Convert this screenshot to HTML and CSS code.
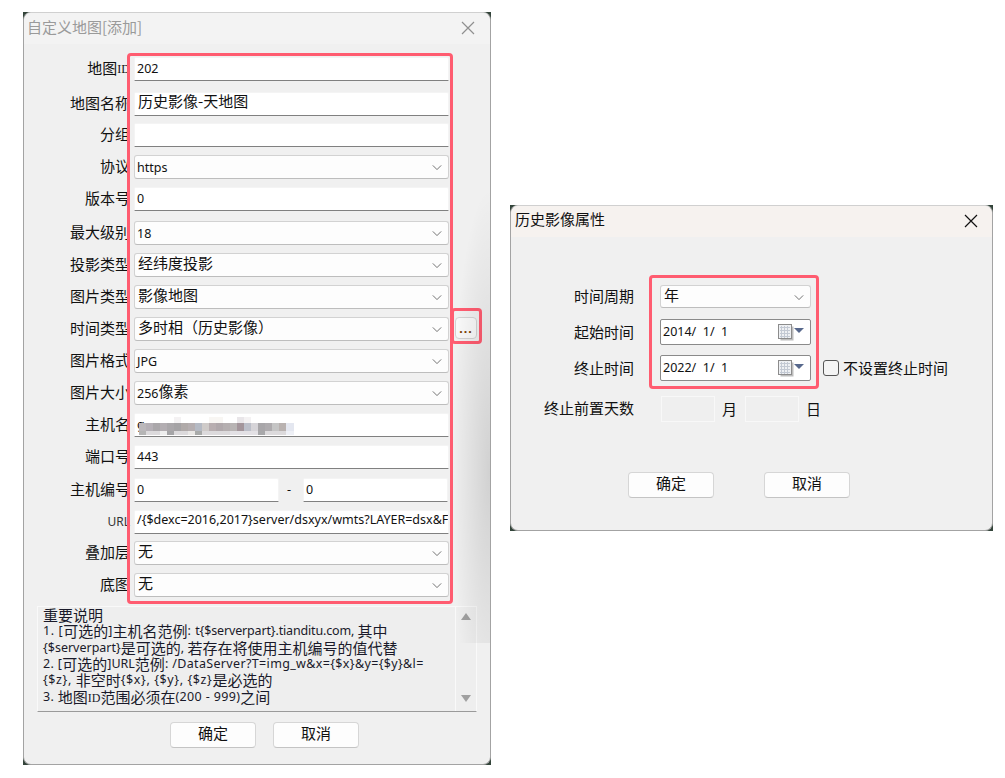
FILE: index.html
```html
<!DOCTYPE html>
<html lang="zh-CN">
<head>
<meta charset="utf-8">
<title>自定义地图</title>
<link rel="stylesheet" href="styles.css">
</head>
<body>
<svg class="defs" width="0" height="0" aria-hidden="true">
  <symbol id="chev" viewBox="0 0 12 8"><path d="M1 1.5 6 6.5 11 1.5" fill="none" stroke="#666" stroke-width="1.1"/></symbol>
  <symbol id="x" viewBox="0 0 14 14"><path d="M1 1 13 13M13 1 1 13" fill="none" stroke="currentColor" stroke-width="1.2"/></symbol>
  <symbol id="cal" viewBox="0 0 28 17">
    <rect x="2.5" y="2.5" width="13" height="14" fill="#bdbdbd"/>
    <rect x="0.5" y="0.5" width="13" height="14" fill="#eef0f3" stroke="#8c8c8c"/>
    <path d="M2 3.500H12M2 6.500H12M2 9.500H12M2 12.500H12M3.500 2V14M6.500 2V14M9.500 2V14" stroke="#c3c9d3" stroke-width="1"/>
    <path d="M16 4H26L21 9Z" fill="#57688c"/>
  </symbol>
</svg>

<section class="win win-left">
  <div class="win-shell">
    <header class="titlebar titlebar-left">
      <span class="title-text title-muted">自定义地图[添加]</span>
      <svg class="close close-muted"><use href="#x"/></svg>
    </header>
    <div class="left-body">
      <div class="form-grid">
        <label class="lbl">地图<span class="id-mark">ID</span></label>
        <div class="field"><span class="lat">202</span></div><span></span>

        <label class="lbl">地图名称</label>
        <div class="field field-high">历史影像-天地图</div><span></span>

        <label class="lbl">分组</label>
        <div class="field"></div><span></span>

        <label class="lbl">协议</label>
        <div class="combo"><span class="lat">https</span><svg class="chev"><use href="#chev"/></svg></div><span></span>

        <label class="lbl">版本号</label>
        <div class="field"><span class="lat">0</span></div><span></span>

        <label class="lbl">最大级别</label>
        <div class="combo"><span class="lat">18</span><svg class="chev"><use href="#chev"/></svg></div><span></span>

        <label class="lbl">投影类型</label>
        <div class="combo">经纬度投影<svg class="chev"><use href="#chev"/></svg></div><span></span>

        <label class="lbl">图片类型</label>
        <div class="combo">影像地图<svg class="chev"><use href="#chev"/></svg></div><span></span>

        <label class="lbl">时间类型</label>
        <div class="combo">多时相（历史影像）<svg class="chev"><use href="#chev"/></svg></div>
        <button class="more lat" type="button">...</button>

        <label class="lbl">图片格式</label>
        <div class="combo"><span class="lat">JPG</span><svg class="chev"><use href="#chev"/></svg></div><span></span>

        <label class="lbl">图片大小</label>
        <div class="combo"><span class="lat">256</span>像素<svg class="chev"><use href="#chev"/></svg></div><span></span>

        <label class="lbl">主机名</label>
        <div class="field host"><span class="lat">g</span>
          <svg class="mosaic" viewBox="0 0 155 20" width="155" height="20" aria-hidden="true">
            <g fill="#f4f2f3"><rect x="35" y="0" width="7" height="6"/><rect x="70" y="0" width="14" height="6" fill="#f8f6f3"/><rect x="98" y="0" width="7" height="6" fill="#e9e6e9"/><rect x="105" y="0" width="7" height="6"/></g>
            <g fill="#aaa7aa">
              <rect x="0" y="6" width="7" height="8" fill="#bbb8bb"/><rect x="7" y="6" width="7" height="8" fill="#b5b0b6"/><rect x="14" y="6" width="7" height="8"/><rect x="21" y="6" width="7" height="8" fill="#b3aeb2"/><rect x="28" y="6" width="7" height="8"/><rect x="35" y="6" width="7" height="8" fill="#a5a3a5"/><rect x="42" y="6" width="7" height="8" fill="#b0aaa9"/><rect x="49" y="6" width="7" height="8" fill="#b5aeb0"/><rect x="56" y="6" width="7" height="8" fill="#b5bac4"/><rect x="63" y="6" width="7" height="8" fill="#cfcbc9"/><rect x="70" y="6" width="7" height="8" fill="#b8aeb0"/><rect x="77" y="6" width="7" height="8" fill="#b0a8ab"/><rect x="84" y="6" width="7" height="8" fill="#b5afb0"/><rect x="91" y="6" width="7" height="8" fill="#b8b4b4"/><rect x="98" y="6" width="7" height="8" fill="#a3959b"/><rect x="105" y="6" width="7" height="8" fill="#bcbfc9"/><rect x="112" y="6" width="7" height="8" fill="#d6d4d8"/><rect x="119" y="6" width="7" height="8" fill="#a8a6a9"/><rect x="126" y="6" width="7" height="8" fill="#aeabae"/><rect x="133" y="6" width="7" height="8" fill="#c5c5c5"/><rect x="140" y="6" width="7" height="8" fill="#b9b2b0"/><rect x="147" y="6" width="8" height="8" fill="#e4e7f0"/>
            </g>
            <g fill="#dcdadc">
              <rect x="0" y="14" width="7" height="4" fill="#b5b5b5"/><rect x="21" y="14" width="7" height="4" fill="#eeeeee"/><rect x="28" y="14" width="7" height="4" fill="#a5a5a7"/><rect x="49" y="14" width="7" height="4" fill="#eae8e6"/><rect x="56" y="14" width="7" height="4" fill="#a9abaa"/><rect x="63" y="14" width="7" height="4"/><rect x="91" y="14" width="28" height="4" fill="#e3e1e5"/><rect x="119" y="14" width="7" height="4" fill="#a8a8aa"/><rect x="7" y="14" width="14" height="4"/><rect x="35" y="14" width="14" height="4"/><rect x="70" y="14" width="21" height="4"/><rect x="126" y="14" width="21" height="4"/><rect x="147" y="14" width="8" height="4" fill="#eef0f6"/>
            </g>
          </svg>
        </div><span></span>

        <label class="lbl">端口号</label>
        <div class="field"><span class="lat">443</span></div><span></span>

        <label class="lbl">主机编号</label>
        <div class="pair">
          <div class="field"><span class="lat">0</span></div>
          <span class="dash lat">-</span>
          <div class="field"><span class="lat">0</span></div>
        </div><span></span>

        <label class="lbl lat-lbl">URL</label>
        <div class="field url"><span class="lat">/{$dexc=2016,2017}server/dsxyx/wmts?LAYER=dsx&amp;F</span></div><span></span>

        <label class="lbl">叠加层</label>
        <div class="combo">无<svg class="chev"><use href="#chev"/></svg></div><span></span>

        <label class="lbl">底图</label>
        <div class="combo">无<svg class="chev"><use href="#chev"/></svg></div><span></span>
      </div>

      <div class="notes">
        <div class="notes-text">
          <div class="note-line"><b>重要说明</b></div>
          <div class="note-line"><span class="spread-lg">1. [</span><b>可选的</b>]<b>主机名范例</b><span class="spread-lg">: </span><span class="tight">t{$serverpart}.tianditu.com, </span><b>其中</b></div>
          <div class="note-line">{$serverpart}<b>是可选的</b>, <b>若存在将使用主机编号的值代替</b></div>
          <div class="note-line"><span class="spread-md">2. [</span><b>可选的</b>]URL<b>范例</b><span class="spread-md">: /DataServer?T=img_w&amp;x={$x}&amp;y={$y}&amp;l=</span></div>
          <div class="note-line"><span class="spread-lg">{$z}, </span><b>非空时</b><span class="spread-lg">{$x}, {$y}, {$z}</span><b>是必选的</b></div>
          <div class="note-line"><span class="spread-md">3. </span><b>地图</b><i>ID</i><b>范围必须在</b><span class="spread-md">(200 - 999)</span><b>之间</b></div>
        </div>
        <div class="notes-scroll"><span class="arrow-up"></span><span class="arrow-down"></span></div>
      </div>

      <div class="actions actions-left">
        <button class="btn" type="button">确定</button>
        <button class="btn" type="button">取消</button>
      </div>
    </div>
    <div class="mark mark-form"></div>
    <div class="mark mark-more"></div>
    <div class="side-shade"></div>
  </div>
</section>

<section class="win win-right">
  <div class="win-shell">
    <header class="titlebar titlebar-right">
      <span class="title-text title-dark">历史影像属性</span>
      <svg class="close"><use href="#x"/></svg>
    </header>
    <div class="right-body">
      <div class="prop-grid">
        <label class="lbl prop-lbl prop-edge prop-first">时间周期</label>
        <div class="combo combo-short">年<svg class="chev"><use href="#chev"/></svg></div>
        <span></span>

        <label class="lbl prop-lbl">起始时间</label>
        <div class="date"><span class="lat">2014/&nbsp; 1/&nbsp; 1</span><svg class="cal"><use href="#cal"/></svg></div>
        <span></span>

        <label class="lbl prop-lbl">终止时间</label>
        <div class="date"><span class="lat">2022/&nbsp; 1/&nbsp; 1</span><svg class="cal"><use href="#cal"/></svg></div>
        <label class="check"><span class="box"></span>不设置终止时间</label>

        <label class="lbl prop-lbl prop-edge">终止前置天数</label>
        <div class="days">
          <span class="day-box"></span><span class="unit">月</span>
          <span class="day-box"></span><span class="unit">日</span>
        </div>
        <span></span>
      </div>
      <div class="actions actions-right">
        <button class="btn" type="button">确定</button>
        <button class="btn" type="button">取消</button>
      </div>
    </div>
    <div class="mark mark-prop"></div>
  </div>
</section>
</body>
</html>
```

FILE: styles.css
```css
* { box-sizing: border-box; }

html, body {
  margin: 0;
  height: 100%;
  background: #fff;
}

body {
  position: relative;
  width: 1005px;
  height: 778px;
  overflow: hidden;
  font-family: "Noto Sans CJK SC", "Noto Sans", sans-serif;
  font-size: 15px;
  color: #111;
}

.defs { position: absolute; }

.lat {
  display: inline-block;
  margin-left: -1px;
  padding-top: 4px;
  font-family: "Noto Sans", "Noto Sans CJK SC", sans-serif;
  font-size: 12.5px;
}

/* windows on the desktop */
.win {
  position: absolute;
  background: #33443a;
}

.win-left { left: 23px; top: 12px; width: 468px; height: 753px; }
.win-right { left: 510px; top: 205px; width: 483px; height: 326px; }

.win-shell {
  position: relative;
  width: 100%;
  height: 100%;
  display: flex;
  flex-direction: column;
  background: #f0f0f0;
  border-radius: 8px;
  border: 1px solid #a3a3a3;
  border-top-color: #d0d0d0;
  overflow: hidden;
}

.titlebar {
  display: flex;
  align-items: center;
  justify-content: space-between;
  flex: none;
}

.titlebar-left { height: 31px; background: #f3f3f3; padding: 0 15px 0 3px; }
.titlebar-right { height: 31px; background: #f6f2ef; padding: 0 14px 0 4px; }

.title-text { line-height: 1; padding-bottom: 4px; }
.title-dark { padding-bottom: 6px; }
.title-muted { color: #9a9a9a; }

.close { width: 14px; height: 14px; margin-bottom: 2px; color: #111; }
.close-muted { color: #8f8f8f; }

/* left form */
.left-body { flex: 1; padding-top: 13px; }

.form-grid {
  display: grid;
  grid-template-columns: 106px 315px 28px;
  grid-template-rows: 35px 31px 32px 32px 34px 32px 32px 32px 32px 32px 32px 32px 33px 32px 31px 32px 24px;
  column-gap: 4px;
}

.lbl {
  display: flex;
  align-items: center;
  justify-content: flex-end;
  height: 24px;
  padding-bottom: 4px;
  white-space: nowrap;
  color: #111;
}

.id-mark {
  padding-top: 4px;
  font-family: "Liberation Serif", serif;
  font-size: 12px;
}

.lat-lbl {
  padding-bottom: 2px;
  font-family: "Noto Sans", sans-serif;
  font-size: 12px;
  color: #333;
}

.field, .combo, .date {
  display: flex;
  align-items: center;
  white-space: nowrap;
  overflow: hidden;
  line-height: 18px;
}

.field {
  height: 24px;
  padding: 0 0 4px 3px;
  background: #fff;
  border: 1px solid #f4f4f4;
  border-bottom: 1px solid #808080;
  border-radius: 2px 2px 0 0;
}

.field-high { align-items: flex-start; line-height: 16px; }

.combo {
  position: relative;
  height: 24px;
  padding: 0 0 4px 3px;
  background: #fdfdfd;
  border: 1px solid #d2d2d2;
  border-bottom-color: #bdbdbd;
  border-radius: 3px;
}

.combo .lat { padding-top: 6px; }

.chev {
  position: absolute;
  right: 6px;
  top: 8px;
  width: 10px;
  height: 7px;
}

.host { position: relative; }

.mosaic {
  position: absolute;
  left: 4px;
  top: 3px;
}

.pair {
  display: flex;
  align-items: flex-start;
  padding-right: 1px;
}

.pair .field { width: 145px; }
.pair .field:last-child { margin-left: auto; }

.dash {
  margin-left: 8px;
  padding-top: 0;
  line-height: 24px;
}

.url .lat { padding-top: 0; }

.more {
  width: 22px;
  height: 22px;
  margin-left: 2px;
  padding: 3px 0 0;
  background: #f8f8f8;
  border: 1px solid #d2d2d2;
  border-radius: 4px;
  color: #7a3c00;
  font-weight: 700;
  letter-spacing: 1px;
  line-height: 1;
}

/* notes */
.notes {
  display: flex;
  width: 440px;
  height: 106px;
  margin: 9px 0 0 13px;
  border: 1px solid #f9f9f9;
  border-bottom: 1px solid #9a9a9a;
  background: #eeeeee;
}

.notes-text {
  flex: 1;
  padding-left: 5px;
  font-family: "Noto Sans", "Noto Sans CJK SC", sans-serif;
  font-size: 12.5px;
  white-space: nowrap;
  overflow: hidden;
  color: #1a1a2a;
}

.note-line {
  display: flex;
  align-items: center;
  height: 16.3px;
  line-height: 16px;
  white-space: pre;
}

.spread-lg { letter-spacing: .6px; }
.spread-md { letter-spacing: .35px; }
.tight { letter-spacing: -.15px; }

.notes-text b {
  font-family: "Noto Sans CJK SC", sans-serif;
  font-size: 15px;
  font-weight: 400;
  line-height: 16px;
}

.notes-text i {
  padding-top: 3px;
  font-family: "Liberation Serif", serif;
  font-size: 12px;
  font-style: normal;
}

.notes-scroll {
  width: 21px;
  flex: none;
  display: flex;
  flex-direction: column;
  align-items: center;
  justify-content: space-between;
  padding: 6px 0 9px;
  border-left: 1px solid #f9f9f9;
}

.arrow-up, .arrow-down {
  width: 0;
  height: 0;
  border-left: 5px solid transparent;
  border-right: 5px solid transparent;
}

.arrow-up { border-bottom: 7px solid #a0a0a0; }
.arrow-down { border-top: 7px solid #a0a0a0; }

/* buttons */
.actions { display: flex; }

.actions-left { margin: 10px 0 0 146px; gap: 17px; }
.actions-right { margin: 50px 0 0 117px; gap: 50px; }

.btn {
  width: 86px;
  height: 26px;
  padding: 0 0 5px;
  background: #fdfdfd;
  border: 1px solid #d6d6d6;
  border-bottom-color: #c4c4c4;
  border-radius: 4px;
  font-family: inherit;
  font-size: 15px;
  line-height: 1;
  color: #111;
}

/* annotation rectangles */
.mark {
  position: absolute;
  border: 3px solid #ff5c70;
  border-radius: 4px;
  pointer-events: none;
}

.mark-form { left: 103px; top: 40px; width: 326px; height: 551px; }
.mark-more { left: 427px; top: 295px; width: 31px; height: 36px; }
.mark-prop { left: 138px; top: 69px; width: 170px; height: 114px; }

.side-shade {
  position: absolute;
  right: 0;
  top: 180px;
  width: 38px;
  height: 450px;
  background: radial-gradient(ellipse at 100% 62%, rgba(0, 0, 0, .13), rgba(0, 0, 0, 0) 72%);
  pointer-events: none;
}

/* right window */
.right-body { flex: 1; padding-top: 48px; }

.prop-grid {
  display: grid;
  grid-template-columns: 123px 151px 140px;
  grid-template-rows: 34px 36px 41px 26px;
  column-gap: 26px;
}

.prop-lbl { height: 26px; padding-bottom: 2px; }
.prop-edge { padding-bottom: 4px; }
.prop-first { height: 24px; }

.combo-short {
  height: 23px;
  padding-bottom: 3px;
}

.date {
  position: relative;
  height: 26px;
  padding-left: 3px;
  background: #fff;
  border: 1px solid #8a8a8a;
  border-radius: 2px;
}

.date .lat { padding-top: 0; }

.cal {
  position: absolute;
  right: 4px;
  top: 4px;
  width: 28px;
  height: 17px;
}

.check {
  display: flex;
  align-items: center;
  gap: 4px;
  height: 26px;
  padding-bottom: 2px;
  margin-left: -14px;
  white-space: nowrap;
}

.box {
  width: 16px;
  height: 16px;
  margin-top: 2px;
  border: 1px solid #555;
  border-radius: 3px;
  background: #f4f4f4;
}

.days {
  display: flex;
  align-items: center;
  height: 26px;
  margin-left: 1px;
  white-space: nowrap;
}

.day-box {
  flex: none;
  width: 54px;
  height: 26px;
  background: #efefef;
  border: 1px solid #f8f8f8;
}

.unit {
  flex: none;
  width: 30px;
  padding: 0 0 2px 7px;
}
```
